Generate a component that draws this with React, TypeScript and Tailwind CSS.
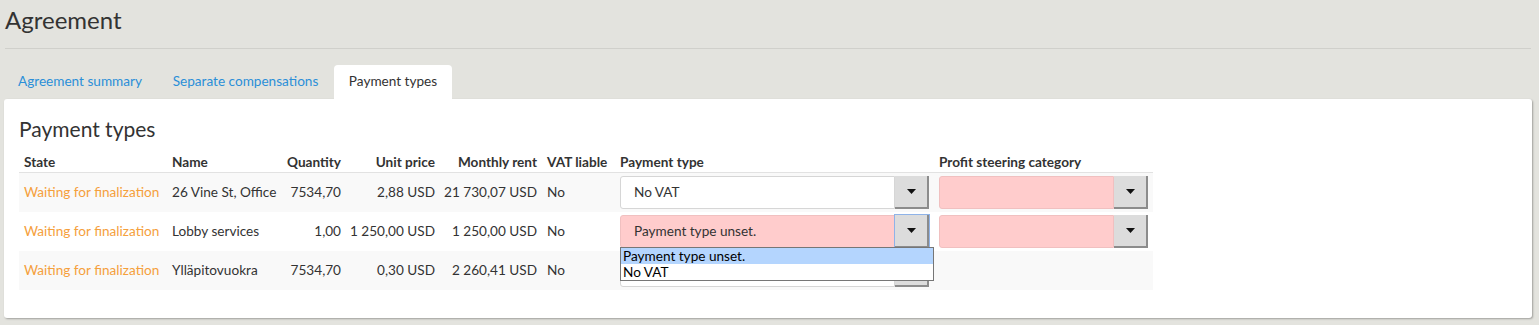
import React from "react";

type Row = {
  name: string;
  quantity: string;
  unitPrice: string;
  rent: string;
  paymentType: string;
  unset: boolean;
};

const rows: Row[] = [
  { name: "26 Vine St, Office", quantity: "7534,70", unitPrice: "2,88 USD", rent: "21 730,07 USD", paymentType: "No VAT", unset: false },
  { name: "Lobby services", quantity: "1,00", unitPrice: "1 250,00 USD", rent: "1 250,00 USD", paymentType: "Payment type unset.", unset: true },
  // row 3's select sits under the open dropdown, its text is covered
  { name: "Ylläpitovuokra", quantity: "7534,70", unitPrice: "0,30 USD", rent: "2 260,41 USD", paymentType: "", unset: false },
];

const cols = "grid grid-cols-[148px_115px_64px_94px_102px_73px_319px_219px]";
const num = "px-[5px] flex justify-end whitespace-nowrap";

const Caret = () => (
  <svg width="9" height="5" viewBox="0 0 9 5">
    <path d="M0 0h9L4.5 5z" fill="#111" />
  </svg>
);

const Select: React.FC<{ value: string; pink: boolean; width: string; focused?: boolean }> = ({
  value,
  pink,
  width,
  focused,
}) => (
  <div className="flex h-[33px]">
    <div
      className={`${width} flex items-center rounded-l-[3px] border pl-[13px] text-[13.6px] text-[#333] ${
        pink ? "bg-[#ffcccc] border-[#f0c0c0]" : "bg-white border-[#d6d6d6]"
      }`}
    >
      {value}
    </div>
    <div
      className={`flex w-[34px] items-center justify-center bg-[#dcdcdc] border-r-2 border-b-2 border-[#8c8c8c] ${
        focused ? "outline outline-1 outline-[#8fb3e8]" : ""
      }`}
    >
      <Caret />
    </div>
  </div>
);

export default function App() {
  return (
    <div className="min-h-[325px] bg-[#e3e3de] font-['Lato',sans-serif] text-[#333] pb-[7px]">
      <div className="px-[5px] pt-[4px]">
        <h1 className="text-[24px] leading-[31px] text-[#333]">Agreement</h1>
        <div className="mt-[13px] mr-[3px] border-t border-[#d0d0cb]" />
      </div>

      {/* Tabs */}
      <div className="mt-[16px] flex pl-[3px] text-[13.6px]">
        <div className="w-[154px] h-[34px] pb-[2px] flex items-center justify-center text-[#2b8fd8]">Agreement summary</div>
        <div className="w-[177px] h-[34px] pb-[2px] flex items-center justify-center text-[#2b8fd8]">Separate compensations</div>
        <div className="w-[118px] h-[34px] pb-[2px] flex items-center justify-center bg-white rounded-t-[4px] text-[#333]">
          Payment types
        </div>
      </div>

      {/* Panel */}
      <div className="ml-[4px] mr-[7px] bg-white rounded-[3px] shadow-[1px_1px_2px_rgba(0,0,0,0.3)] px-[15px] pt-[17px] pb-[28px]">
        <h2 className="text-[21px] leading-[26px] text-[#333]">Payment types</h2>

        <div className="mt-[10px] w-[1134px] text-[13.6px]">
          <div className={`${cols} h-[21px] items-center border-b border-[#e2e2e2] font-bold text-[#333]`}>
            <div className="px-[5px]">State</div>
            <div className="px-[5px]">Name</div>
            <div className={num}>Quantity</div>
            <div className={num}>Unit price</div>
            <div className={num}>Monthly rent</div>
            <div className="px-[5px] whitespace-nowrap">VAT liable</div>
            <div className="px-[5px]">Payment type</div>
            <div className="px-[5px]">Profit steering category</div>
          </div>

          {rows.map((r, i) => (
            <div
              key={i}
              className={`${cols} h-[39px] items-center ${i % 2 === 0 ? "bg-[#f9f9f9]" : "bg-white"}`}
            >
              <div className="px-[5px] whitespace-nowrap text-[#f5a03c]">Waiting for finalization</div>
              <div className="px-[5px] whitespace-nowrap">{r.name}</div>
              <div className={num}>{r.quantity}</div>
              <div className={num}>{r.unitPrice}</div>
              <div className={num}>{r.rent}</div>
              <div className="px-[5px]">No</div>
              <div className="relative px-[5px]">
                <Select value={r.paymentType} pink={r.unset} width="w-[276px]" focused={i === 1} />
                {i === 1 && (
                  <div className="absolute left-[5px] top-[32px] z-10 w-[314px] border border-[#767676] bg-white text-[13.6px] leading-[16px] text-black">
                    <div className="bg-[#b4d5fe] pl-[2px]">Payment type unset.</div>
                    <div className="pl-[2px]">No VAT</div>
                  </div>
                )}
              </div>
              <div className="px-[5px]">
                {i < 2 && <Select value="" pink width="w-[176px]" />}
              </div>
            </div>
          ))}
        </div>
      </div>
    </div>
  );
}
